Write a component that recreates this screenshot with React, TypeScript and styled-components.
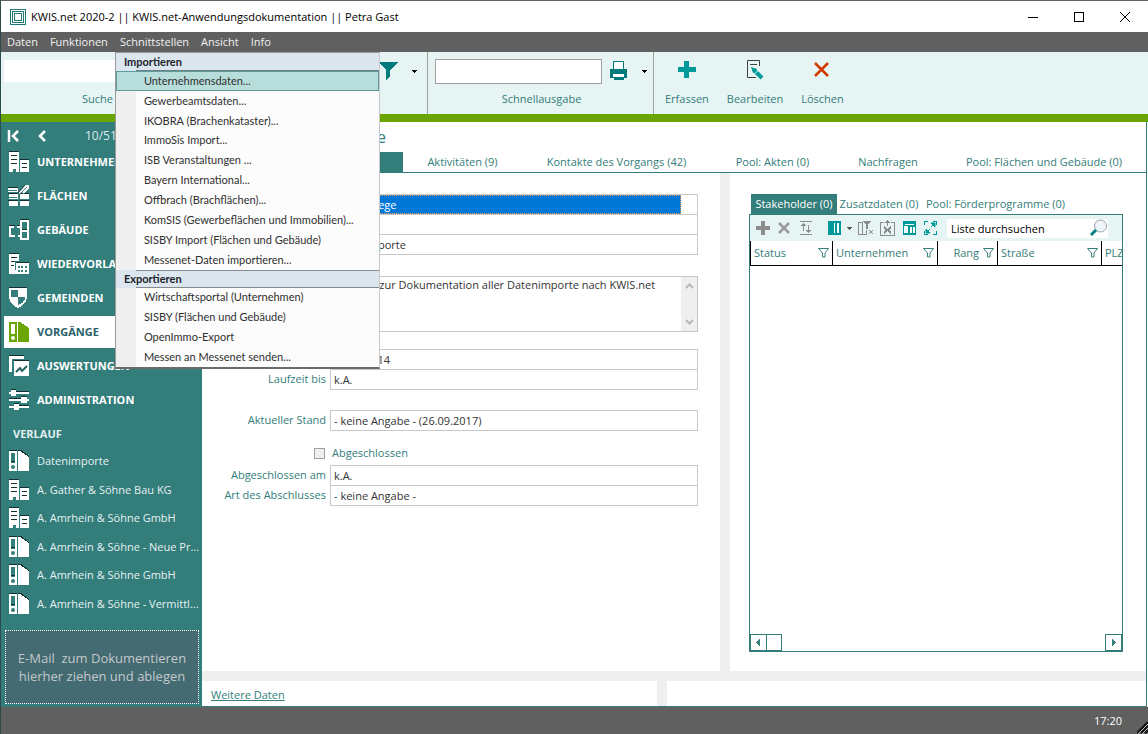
import React from "react";
import styled, { createGlobalStyle, css } from "styled-components";

const teal = "#337d7b";
const accent = "#009999";
const grey = "#606060";
const line = "#c8c8c8";
const pale = "#e6f5f4";

const GlobalStyle = createGlobalStyle`
  *, *::before, *::after { box-sizing: border-box; }
  body { margin: 0; background: ${grey}; }
  body, button, input, textarea, table {
    font-family: "Open Sans", "Noto Sans", sans-serif;
    font-size: 11px;
    line-height: 16px;
  }
  button { border: 0; padding: 0; background: none; color: inherit; }
  svg { display: block; flex: none; }
`;

/* ---------- window frame ---------- */

const Window = styled.div`
  display: flex;
  flex-direction: column;
  min-height: 100vh;
  border-top: 1px solid ${grey};
  border-left: 1px solid #2b4a4c;
  background: #fff;
`;

const TitleBar = styled.header`
  display: flex;
  align-items: center;
  height: 31px;
  padding-left: 9px;
  gap: 5px;
  background: #fff;
`;

const WindowTitle = styled.h1`
  flex: 1;
  margin: 0;
  font-size: 11px;
  font-weight: 400;
  color: #000;
  white-space: nowrap;
`;

const WindowButtons = styled.div`
  display: flex;
`;

const WindowButton = styled.button`
  display: flex;
  align-items: center;
  justify-content: center;
  width: 46px;
  height: 28px;
`;

const MenuBar = styled.nav`
  display: flex;
  align-items: center;
  gap: 12px;
  height: 20px;
  padding-left: 6px;
  background: ${grey};
  color: #f0f0f0;
`;

const MenuAnchor = styled.div`
  position: relative;
  display: flex;
`;

const MenuButton = styled.button`
  height: 20px;
`;

const Popup = styled.div`
  position: absolute;
  z-index: 5;
  top: 20px;
  left: -5px;
  display: flex;
  flex-direction: column;
  width: 265px;
  height: 317px;
  border: 1px solid #9a9a9a;
  border-right-color: #c8c8c8;
  border-bottom: 2px solid #6b6b6b;
  background: linear-gradient(to right, #efefef 20px, #fcfcfc 20px);
  color: #303030;
`;

const PopupHeading = styled.div`
  flex: 1;
  display: flex;
  align-items: center;
  padding-left: 8px;
  font-family: Lato, "Open Sans", sans-serif;
  font-weight: 700;
  color: #1c222c;
  background:
    linear-gradient(#85898f, #85898f) 20px 100% / 100% 1px no-repeat,
    linear-gradient(#85898f, #85898f) 20px 0 / 100% 1px no-repeat,
    #dce6ee;
  &:first-child {
    background: linear-gradient(#6f7f85, #6f7f85) 20px 100% / 100% 1px no-repeat, #dce6ee;
  }
`;

const PopupItem = styled.button<{ $active?: boolean }>`
  flex: 1;
  display: flex;
  align-items: center;
  padding-left: 27px;
  border: 1px solid transparent;
  font-family: Lato, "Open Sans", sans-serif;
  text-align: left;
  white-space: nowrap;
  ${(p) => p.$active && css`
    background: #b8dedb;
    border-color: #5d9c98;
  `}
`;

/* ---------- ribbon ---------- */

const Ribbon = styled.div`
  display: flex;
  height: 70px;
  padding-left: 3px;
  border-bottom: 8px solid #6ba500;
  background: ${pale};
  color: ${teal};
`;

const RibbonGroup = styled.div<{ $width: number }>`
  display: flex;
  flex-direction: column;
  align-items: center;
  gap: 8px;
  width: ${(p) => p.$width}px;
  padding-top: 7px;
  border-right: 1px solid #a0a0a0;
`;

const RibbonRow = styled.div<{ $end?: number }>`
  display: flex;
  align-items: center;
  align-self: stretch;
  height: 24px;
  padding-right: ${(p) => p.$end ?? 0}px;
`;

const RibbonLabel = styled.span`
  padding-left: 2px;
`;

const SearchLabel = styled.label`
  align-self: flex-start;
  padding-left: 78px;
`;

const RibbonSearch = styled.input`
  flex: 1;
  height: 22px;
  border: 0;
  background: #fff;
`;

const QuickOutput = styled.input`
  width: 167px;
  height: 25px;
  margin: 0 8px 0 7px;
  border: 1px solid #a0a0a0;
  background: #fff;
`;

const RibbonActions = styled.div`
  display: flex;
  gap: 18px;
  padding: 5px 0 0 11px;
`;

const RibbonAction = styled.button`
  display: flex;
  flex-direction: column;
  align-items: center;
  gap: 9px;
`;

const DropArrow = styled.button`
  display: flex;
  align-items: center;
  margin-left: 14px;
`;

/* ---------- body ---------- */

const Body = styled.div`
  flex: 1;
  display: flex;
`;

const Sidebar = styled.aside`
  display: flex;
  flex-direction: column;
  width: 201px;
  padding: 0 3px 3px 3px;
  background: ${teal};
  color: #fff;
`;

const Pager = styled.div`
  display: flex;
  align-items: center;
  gap: 16px;
  height: 24px;
  padding: 4px 0 0 3px;
  font-size: 12px;
`;

const PagerCount = styled.span`
  margin-left: 20px;
  color: #dcecec;
`;

const NavList = styled.nav`
  display: flex;
  flex-direction: column;
  gap: 2px;
`;

const NavItem = styled.a<{ $active?: boolean }>`
  display: flex;
  align-items: center;
  gap: 8px;
  height: 32px;
  padding-left: 4px;
  font-weight: 700;
  color: ${(p) => (p.$active ? "#28606a" : "#fff")};
  background: ${(p) => (p.$active ? "#fff" : "transparent")};
  text-decoration: none;
`;

const HistoryTitle = styled.h2`
  margin: 10px 0 5px 9px;
  font-size: 11px;
  line-height: 16px;
  font-weight: 700;
  color: #e4f0f0;
`;

const HistoryList = styled.div`
  flex: 1;
  display: flex;
  flex-direction: column;
`;

const HistoryItem = styled.a`
  flex: 1;
  display: flex;
  align-items: center;
  gap: 8px;
  padding-left: 4px;
  color: #e6f2f2;
  text-decoration: none;
  white-space: nowrap;
`;

const DropZone = styled.div`
  display: flex;
  align-items: center;
  justify-content: center;
  height: 74px;
  margin: 12px 0 0 1px;
  border: 1px dotted #fff;
  background: #446a72;
  color: #c3c9ca;
  font-size: 13px;
  line-height: 18px;
  text-align: center;
  white-space: pre;
`;

const Main = styled.main`
  flex: 1;
  display: flex;
  flex-direction: column;
  min-width: 0;
  border-right: 1px solid ${teal};
  border-bottom: 1px solid ${teal};
  margin-right: 1px;
`;

const RecordTitle = styled.h2`
  width: 184px;
  margin: 0;
  height: 30px;
  padding-top: 4px;
  font-size: 16px;
  line-height: 22px;
  font-weight: 400;
  text-align: right;
  color: ${teal};
`;

const Tabs = styled.div`
  display: flex;
  height: 21px;
  border-bottom: 1px solid ${teal};
  color: ${teal};
`;

const Tab = styled.button<{ $width: number; $active?: boolean }>`
  width: ${(p) => p.$width}px;
  height: 20px;
  white-space: nowrap;
  ${(p) => p.$active && css`
    background: ${teal};
    color: #fff;
  `}
`;

const Panes = styled.div`
  flex: 1;
  display: flex;
  gap: 10px;
  background: #efefef;
`;

const Pane = styled.section<{ $width?: number }>`
  ${(p) => (p.$width ? css`width: ${p.$width}px;` : css`flex: 1; min-width: 0;`)}
  background: #fff;
`;

const FormPane = styled(Pane)`
  padding: 21px 22px 0 0;
`;

const ListPane = styled(Pane)`
  display: flex;
  flex-direction: column;
  padding: 21px 23px 19px 19px;
`;

const Footer = styled.div`
  display: flex;
  gap: 10px;
  height: 35px;
  padding-top: 10px;
  background: #efefef;
`;

const MoreLink = styled.a`
  display: inline-block;
  margin: 6px 0 0 9px;
  color: ${teal};
`;

/* ---------- form ---------- */

const FieldGroup = styled.div<{ $gap?: number }>`
  display: flex;
  flex-direction: column;
  margin-bottom: ${(p) => p.$gap ?? 20}px;
`;

const FieldRow = styled.div`
  display: flex;
  & + & { margin-top: -1px; }
`;

const FieldLabel = styled.label`
  width: 128px;
  padding: 2px 4px 0 0;
  text-align: right;
  white-space: nowrap;
  color: ${teal};
`;

const fieldBox = css`
  flex: 1;
  min-width: 0;
  border: 1px solid ${line};
  background: #fff;
`;

const FieldInput = styled.input`
  ${fieldBox}
  height: 21px;
  padding: 0 3px;
  color: #333;
`;

const Selected = styled.div`
  ${fieldBox}
  height: 21px;
  padding-right: 16px;
`;

const SelectedInput = styled.input`
  display: block;
  width: 100%;
  height: 19px;
  padding: 0 2px;
  border: 1px dotted #e8a05a;
  background: #0078d7;
  color: #fff;
`;

const NoteBox = styled.div`
  ${fieldBox}
  display: flex;
  height: 56px;
`;

const Note = styled.textarea`
  flex: 1;
  border: 0;
  padding: 0 3px;
  resize: none;
  overflow: hidden;
  color: #333;
`;

const NoteScroll = styled.div`
  display: flex;
  flex-direction: column;
  justify-content: space-between;
  align-items: center;
  width: 16px;
  padding: 6px 0 5px;
  background: #efefef;
`;

const CheckRow = styled.div`
  display: flex;
  align-items: center;
  gap: 7px;
  height: 16px;
  margin: 14px 0 4px 112px;
  color: ${teal};
`;

const CheckBox = styled.input`
  appearance: none;
  width: 11px;
  height: 11px;
  margin: 0;
  border: 1px solid #a0a0a0;
  background: #efefef;
`;

/* ---------- list ---------- */

const ListTabs = styled.div`
  display: flex;
  height: 20px;
  padding-left: 2px;
  color: ${teal};
`;

const ListBox = styled.div`
  flex: 1;
  display: flex;
  flex-direction: column;
  border: 1px solid ${teal};
  overflow: hidden;
`;

const ListTools = styled.div`
  display: flex;
  align-items: center;
  height: 26px;
  padding-left: 6px;
  gap: 6px;
  background: ${pale};
`;

const ToolButton = styled.button`
  display: flex;
`;

const ListSearch = styled.label`
  display: flex;
  align-items: center;
  width: 161px;
  height: 19px;
  margin-left: 3px;
  background: #fff;
`;

const ListSearchInput = styled.input`
  flex: 1;
  min-width: 0;
  height: 19px;
  padding: 0 4px;
  border: 0;
  background: transparent;
  &::placeholder { color: #000; opacity: 1; }
`;

const Grid = styled.table`
  width: 100%;
  table-layout: fixed;
  border-collapse: collapse;
  color: ${teal};
`;

const HeadCell = styled.th<{ $width?: number }>`
  width: ${(p) => (p.$width ? p.$width + "px" : "auto")};
  height: 24px;
  padding: 0;
  border-left: 1px solid #000;
  border-bottom: 1px solid #000;
  font-weight: 400;
  text-align: left;
  overflow: hidden;
`;

const HeadInner = styled.div<{ $right?: boolean }>`
  display: flex;
  align-items: center;
  justify-content: ${(p) => (p.$right ? "flex-end" : "space-between")};
  gap: 4px;
  padding: 0 3px;
`;

const ScrollRow = styled.div`
  display: flex;
  height: 17px;
  margin-top: auto;
`;

const ScrollButton = styled.button<{ $end?: boolean }>`
  display: flex;
  align-items: center;
  justify-content: center;
  width: 17px;
  border: 1px solid ${teal};
  margin-left: ${(p) => (p.$end ? "auto" : "0")};
`;

const ScrollThumb = styled.div`
  width: 15px;
  border: 1px solid ${teal};
  border-left: 0;
`;

const StatusBar = styled.footer`
  display: flex;
  align-items: center;
  justify-content: flex-end;
  gap: 15px;
  height: 27px;
  background: ${grey};
  color: #fff;
`;

/* ---------- icons ---------- */

type IconProps = { w?: number; h?: number; children: React.ReactNode };
const Icon = ({ w = 21, h = 22, children }: IconProps) => (
  <svg width={w} height={h} viewBox={`0 0 ${w} ${h}`} fill="none" shapeRendering="crispEdges" aria-hidden="true">
    {children}
  </svg>
);

const BuildingIcon = () => (
  <Icon>
    <path d="M1 1h10v20H8v-3H5v3H1zM12 9h9v12h-9z" fill="#fff" />
    <path d="M1 0h10v1H1zM12 8h9v1h-9zM3 4h6v1H3zM3 8h6v1H3zM3 12h6v1H3zM14 12h5v1h-5zM14 16h5v1h-5z" fill="#12302f" />
  </Icon>
);
const AreaIcon = () => (
  <Icon>
    <path d="M0 3h10v4H0zM1 9h9v5H1zM1 16h9v5H1zM12 9h9v5h-9zM12 16h9v5h-9z" fill="#fff" />
    <path d="M0 2h10v1H0zM0 8h10v1H0zM0 15h10v1H0zM12 8h9v1h-9zM12 15h9v1h-9z" fill="#12302f" />
    <path d="M0 5h9M1 12h8" stroke={teal} />
    <path d="M11 8 18 1h3M15 8l6-6" stroke="#fff" strokeWidth="2" shapeRendering="auto" />
    <path d="M10 8 17 0" stroke="#12302f" shapeRendering="auto" />
  </Icon>
);
const PlanIcon = () => (
  <Icon>
    <path d="M6 8H2v9h5M9 8h4M10 17h3M13 12V2h7v18h-7v-8h7" stroke="#fff" strokeWidth="2" />
    <path d="M12 0h9v1h-9zM1 6h6v1H1zM9 6h3v1H9zM14 10h5v1h-5z" fill="#12302f" />
  </Icon>
);
const CalendarIcon = () => (
  <Icon>
    <path d="M1 1h10v7H7v9h1v4H1zM8 10h13v11H8z" fill="#fff" />
    <path d="M1 0h10v1H1zM8 9h13v1H8zM3 4h6v1H3zM3 8h4v1H3zM3 12h3v1H3z" fill="#12302f" />
    <path d="M10 13h2v2h-2zM13 13h2v2h-2zM17 13h2v2h-2zM10 17h2v2h-2zM13 17h2v2h-2zM17 17h2v2h-2z" fill={teal} />
  </Icon>
);
const ShieldIcon = () => (
  <Icon>
    <path d="M1 1h18v9c0 6-5 9-9 11-4-2-9-5-9-11z" fill="#fff" />
    <path d="M3 3h7v7H3zM10 10h7c0 4-3 7-7 8z" fill={teal} />
    <path d="M1 0h18v1H1z" fill="#12302f" />
  </Icon>
);
const BinderIcon = ({ color = "#fff", hole = teal, edge = true }) => (
  <Icon>
    <path d="M1 1h8v20H1zM10 1h2l9 6v14H10z" fill={color} />
    <path d="M3 3h4v10H3z" fill={hole} />
    <circle cx="5" cy="17" r="2" fill={hole} shapeRendering="auto" />
    {edge && <path d="M1 0h8v1H1zM10 0h3l8 6v1L12 1h-2zM3 11h4v1H3z" fill="#12302f" />}
  </Icon>
);
const ReportIcon = () => (
  <Icon>
    <path d="M1 1h15v3H4v13H1zM6 6h15v15H6z" fill="#fff" />
    <path d="M1 0h15v1H1zM6 5h15v1H6z" fill="#12302f" />
    <path d="m8 17 4-4 2 3 5-5" stroke="#24605f" strokeWidth="2" shapeRendering="auto" />
  </Icon>
);
const SlidersIcon = () => (
  <Icon>
    <path d="M1 3h20v2H1zM1 10h20v2H1zM1 17h20v2H1zM3 1h5v6H3zM13 8h6v6h-6zM6 15h5v6H6z" fill="#fff" />
    <path d="M3 0h5v1H3zM13 7h6v1h-6zM6 14h5v1H6zM8 2h13v1H8zM1 9h12v1H1zM11 16h10v1H11z" fill="#12302f" />
  </Icon>
);
const FunnelSmall = () => (
  <svg width="11" height="10" viewBox="0 0 11 10" fill="none" aria-hidden="true">
    <path d="M.5.5h10L7 5v4H4.500V5z" stroke={teal} />
  </svg>
);
const Caret = ({ color = "#000" }) => (
  <Icon w={5} h={3}><path d="M0 0h5L3 3H2z" fill={color} /></Icon>
);

/* ---------- data ---------- */

const importItems = [
  "Unternehmensdaten...", "Gewerbeamtsdaten...", "IKOBRA (Brachenkataster)...", "ImmoSis Import...",
  "ISB Veranstaltungen ...", "Bayern International...", "Offbrach (Brachflächen)...",
  "KomSIS (Gewerbeflächen und Immobilien)...", "SISBY Import (Flächen und Gebäude)",
  "Messenet-Daten importieren...",
];
const exportItems = [
  "Wirtschaftsportal (Unternehmen)", "SISBY (Flächen und Gebäude)", "OpenImmo-Export", "Messen an Messenet senden...",
];
const navItems = [
  { text: "UNTERNEHMEN", icon: <BuildingIcon /> },
  { text: "FLÄCHEN", icon: <AreaIcon /> },
  { text: "GEBÄUDE", icon: <PlanIcon /> },
  { text: "WIEDERVORLAGE", icon: <CalendarIcon /> },
  { text: "GEMEINDEN", icon: <ShieldIcon /> },
  { text: "VORGÄNGE", icon: <BinderIcon color="#6ba500" hole="#fff" edge={false} />, active: true },
  { text: "AUSWERTUNGEN", icon: <ReportIcon /> },
  { text: "ADMINISTRATION", icon: <SlidersIcon /> },
];
const history = [
  { text: "Datenimporte", firm: false },
  { text: "A. Gather & Söhne Bau KG", firm: true },
  { text: "A. Amrhein & Söhne GmbH", firm: true },
  { text: "A. Amrhein & Söhne - Neue Pr...", firm: false },
  { text: "A. Amrhein & Söhne GmbH", firm: false },
  { text: "A. Amrhein & Söhne - Vermittl...", firm: false },
];
const tabs = [
  { text: "Aktivitäten (9)", width: 119 },
  { text: "Kontakte des Vorgangs (42)", width: 189 },
  { text: "Pool: Akten (0)", width: 123 },
  { text: "Nachfragen", width: 108 },
  { text: "Pool: Flächen und Gebäude (0)", width: 204 },
];

const Field = ({ id, label, value }: { id: string; label: string; value: string }) => (
  <FieldRow>
    <FieldLabel htmlFor={id}>{label}</FieldLabel>
    <FieldInput id={id} defaultValue={value} />
  </FieldRow>
);

const PlainField = ({ name, value }: { name: string; value: string }) => (
  <FieldRow>
    <FieldLabel as="span" />
    <FieldInput aria-label={name} defaultValue={value} />
  </FieldRow>
);

export default function App() {
  return (
    <Window>
      <GlobalStyle />
      <TitleBar>
        <Icon w={16} h={16}>
          <path d="M.5.5h15v15H.5zM2.500 2.500h11v11h-11zM4.500 4.500h7v7h-7z" stroke="#1f7673" />
        </Icon>
        <WindowTitle>KWIS.net 2020-2 || KWIS.net-Anwendungsdokumentation || Petra Gast</WindowTitle>
        <WindowButtons>
          <WindowButton aria-label="Minimieren"><Icon w={10} h={10}><path d="M0 5h10v1H0z" fill="#000" /></Icon></WindowButton>
          <WindowButton aria-label="Maximieren"><Icon w={10} h={10}><path d="M.5.5h9v9h-9z" stroke="#000" /></Icon></WindowButton>
          <WindowButton aria-label="Schließen">
            <svg width="12" height="12" viewBox="0 0 12 12"><path d="m1 1 10 10M11 1 1 11" stroke="#000" /></svg>
          </WindowButton>
        </WindowButtons>
      </TitleBar>

      <MenuBar>
        <MenuButton>Daten</MenuButton>
        <MenuButton>Funktionen</MenuButton>
        <MenuAnchor>
          <MenuButton>Schnittstellen</MenuButton>
          <Popup>
            <PopupHeading>Importieren</PopupHeading>
            {importItems.map((t, i) => <PopupItem key={t} $active={i === 0}>{t}</PopupItem>)}
            <PopupHeading>Exportieren</PopupHeading>
            {exportItems.map((t) => <PopupItem key={t}>{t}</PopupItem>)}
          </Popup>
        </MenuAnchor>
        <MenuButton>Ansicht</MenuButton>
        <MenuButton>Info</MenuButton>
      </MenuBar>

      <Ribbon>
        <RibbonGroup $width={424}>
          <RibbonRow $end={10}>
            <RibbonSearch id="search" />
            <DropArrow aria-label="Filter">
              <Icon w={20} h={20}><path d="M0 1h20l-8 8v7l-4 3V9z" fill="#007b7b" /></Icon>
            </DropArrow>
            <DropArrow aria-label="Filteroptionen"><Caret /></DropArrow>
          </RibbonRow>
          <SearchLabel htmlFor="search">Suche</SearchLabel>
        </RibbonGroup>
        <RibbonGroup $width={226}>
          <RibbonRow>
            <QuickOutput aria-label="Schnellausgabe" />
            <ToolButton aria-label="Drucken">
              <Icon w={18} h={20}>
                <path d="M0 8h17v9H0z" fill="#007b7b" />
                <path d="M3.500.5h10v8h-10z" fill="#fff" stroke="#007b7b" />
                <path d="M3.500 13.500h10v5h-10z" fill="#007b7b" />
                <path d="M3 13h11v3H3z" fill="#fff" />
              </Icon>
            </ToolButton>
            <DropArrow aria-label="Druckoptionen"><Caret /></DropArrow>
          </RibbonRow>
          <RibbonLabel>Schnellausgabe</RibbonLabel>
        </RibbonGroup>
        <RibbonActions>
          <RibbonAction>
            <Icon w={24} h={25}><path d="M9 4h5v6h7v5h-7v6H9v-6H3v-5h6z" fill={accent} /></Icon>
            Erfassen
          </RibbonAction>
          <RibbonAction>
            <svg width="24" height="25" viewBox="0 0 24 25" fill="none">
              <path d="M16.500 9V3.500h-12v17H13M7 7.500h7" stroke="#404040" />
              <path d="m11 13 8 8" stroke={accent} strokeWidth="4" />
              <path d="m8 10 6 2-4 4z" fill={accent} />
              <path d="m12 16.500 3.500-3.500" stroke="#fff" />
            </svg>
            Bearbeiten
          </RibbonAction>
          <RibbonAction>
            <svg width="24" height="25" viewBox="0 0 24 25"><path d="m4 6 13 13M17 6 4 19" stroke="#d03800" strokeWidth="2.500" /></svg>
            Löschen
          </RibbonAction>
        </RibbonActions>
      </Ribbon>

      <Body>
        <Sidebar>
          <Pager>
            <ToolButton aria-label="Erster Datensatz">
              <svg width="13" height="12" viewBox="0 0 13 12" fill="none"><path d="M2 0v12M11 1 6 6l5 5" stroke="#fff" strokeWidth="2.500" /></svg>
            </ToolButton>
            <ToolButton aria-label="Vorheriger Datensatz">
              <svg width="13" height="12" viewBox="0 0 13 12" fill="none"><path d="M9 1 4 6l5 5" stroke="#fff" strokeWidth="2.500" /></svg>
            </ToolButton>
            <PagerCount>10/51</PagerCount>
          </Pager>
          <NavList>
            {navItems.map((n) => <NavItem key={n.text} href="#" $active={n.active}>{n.icon}{n.text}</NavItem>)}
          </NavList>
          <HistoryTitle>VERLAUF</HistoryTitle>
          <HistoryList>
            {history.map((h, i) => (
              <HistoryItem key={i} href="#">{h.firm ? <BuildingIcon /> : <BinderIcon />}{h.text}</HistoryItem>
            ))}
          </HistoryList>
          <DropZone>{"E-Mail  zum Dokumentieren\nhierher ziehen und ablegen"}</DropZone>
        </Sidebar>

        <Main>
          <RecordTitle>Datenimporte</RecordTitle>
          <Tabs>
            <Tab $width={201} $active aria-label="Vorgang" />
            {tabs.map((t) => <Tab key={t.text} $width={t.width}>{t.text}</Tab>)}
          </Tabs>
          <Panes>
            <FormPane $width={518}>
              <FieldGroup $gap={21}>
                <FieldRow>
                  <FieldLabel as="span" />
                  <Selected><SelectedInput aria-label="Vorgangsart" defaultValue="Datenpflege" /></Selected>
                </FieldRow>
                <PlainField name="Nummer" value="" />
                <PlainField name="Bezeichnung" value="Datenimporte" />
              </FieldGroup>
              <FieldGroup $gap={17}>
                <FieldRow>
                  <FieldLabel as="span" />
                  <NoteBox>
                    <Note aria-label="Beschreibung" defaultValue="Vorgang zur Dokumentation aller Datenimporte nach KWIS.net" />
                    <NoteScroll>
                      <svg width="9" height="7" viewBox="0 0 9 7" fill="none"><path d="m1 5 3.500-3.500L8 5" stroke="#b8b8b8" strokeWidth="2" /></svg>
                      <svg width="9" height="7" viewBox="0 0 9 7" fill="none"><path d="m1 1 3.500 3.500L8 1" stroke="#b8b8b8" strokeWidth="2" /></svg>
                    </NoteScroll>
                  </NoteBox>
                </FieldRow>
              </FieldGroup>
              <FieldGroup>
                <PlainField name="Laufzeit von" value="01.01.2014" />
                <Field id="to" label="Laufzeit bis" value="k.A." />
              </FieldGroup>
              <FieldGroup $gap={0}>
                <Field id="state" label="Aktueller Stand" value="- keine Angabe - (26.09.2017)" />
              </FieldGroup>
              <CheckRow>
                <CheckBox type="checkbox" id="done" />
                <label htmlFor="done">Abgeschlossen</label>
              </CheckRow>
              <FieldGroup>
                <Field id="doneAt" label="Abgeschlossen am" value="k.A." />
                <Field id="doneKind" label="Art des Abschlusses" value="- keine Angabe -" />
              </FieldGroup>
            </FormPane>

            <ListPane>
              <ListTabs>
                <Tab $width={86} $active>Stakeholder (0)</Tab>
                <Tab $width={84}>Zusatzdaten (0)</Tab>
                <Tab $width={149}>Pool: Förderprogramme (0)</Tab>
              </ListTabs>
              <ListBox>
                <ListTools>
                  <ToolButton aria-label="Hinzufügen"><Icon w={14} h={14}><path d="M5 0h4v5h5v4H9v5H5V9H0V5h5z" fill="#8c8c8c" /></Icon></ToolButton>
                  <ToolButton aria-label="Entfernen">
                    <svg width="16" height="14" viewBox="0 0 16 14"><path d="m3 2 10 10M13 2 3 12" stroke="#999" strokeWidth="2.500" /></svg>
                  </ToolButton>
                  <ToolButton aria-label="Sortieren">
                    <Icon w={14} h={16}>
                      <path d="M2 1.500h12M2 14.500h12M5.500 4v7M10.500 5v7" stroke="#8c8c8c" />
                      <path d="M3 6h5L6 3H5zM8 10h5l-2 3h-1z" fill="#8c8c8c" />
                    </Icon>
                  </ToolButton>
                  <ToolButton aria-label="Spalten">
                    <Icon w={23} h={14}>
                      <path d="M10 0h13v14H10z" fill={accent} /><path d="M16 2h1v10h-1zM19 2h2v10h-2z" fill="#fff" />
                    </Icon>
                  </ToolButton>
                  <Caret color="#555" />
                  <ToolButton aria-label="Filter entfernen">
                    <Icon w={16} h={16}>
                      <path d="M.5 2.500h4v12h-4zM4.500 5.500v9h4v-5M11 10l4 4M15 10l-4 4" stroke="#8c8c8c" />
                      <path d="M4 1h9l-3 4v4H8V5z" fill="#8c8c8c" />
                    </Icon>
                  </ToolButton>
                  <ToolButton aria-label="Exportieren">
                    <Icon w={15} h={16}>
                      <path d="M4 2.500H.5v13h14v-13H11M7.500 1v5" stroke="#8c8c8c" />
                      <path d="M5 3h5L8 0H7z" fill="#8c8c8c" />
                      <path d="m4 7 7 6M11 7l-7 6" stroke="#8c8c8c" strokeWidth="2" />
                    </Icon>
                  </ToolButton>
                  <ToolButton aria-label="Ansicht">
                    <Icon w={16} h={14}>
                      <path d="M2 0h13v14H2z" fill={accent} /><path d="M4 3h9v1H4zM3 5h4v7H3zM9 6h2v6H9zM12 6h2v6h-2z" fill="#fff" />
                    </Icon>
                  </ToolButton>
                  <ToolButton aria-label="Vollbild">
                    <Icon w={15} h={14}>
                      <path d="M1.500 4V.5H5M10 .5h3.500V4M13.500 10v3.500H10M5 13.500H1.500V10" stroke={accent} />
                      <path d="M8 2h4v4zM3 8v4h4zM8 6l3-3M4 11l3-3" fill={accent} stroke={accent} shapeRendering="auto" />
                    </Icon>
                  </ToolButton>
                  <ListSearch>
                    <ListSearchInput placeholder="Liste durchsuchen" aria-label="Liste durchsuchen" />
                    <svg width="20" height="18" viewBox="0 0 20 18" fill="none">
                      <circle cx="12.500" cy="7" r="6" fill="#eef6fb" stroke="#98a4aa" />
                      <path d="m8 11-5 5" stroke="#00817f" strokeWidth="3" />
                    </svg>
                  </ListSearch>
                </ListTools>
                <Grid>
                  <thead>
                    <tr>
                      <HeadCell $width={82}><HeadInner>Status<FunnelSmall /></HeadInner></HeadCell>
                      <HeadCell $width={105}><HeadInner>Unternehmen<FunnelSmall /></HeadInner></HeadCell>
                      <HeadCell $width={60}><HeadInner $right>Rang<FunnelSmall /></HeadInner></HeadCell>
                      <HeadCell $width={104}><HeadInner>Straße<FunnelSmall /></HeadInner></HeadCell>
                      <HeadCell><HeadInner>PLZ</HeadInner></HeadCell>
                    </tr>
                  </thead>
                </Grid>
                <ScrollRow>
                  <ScrollButton aria-label="Nach links"><Icon w={5} h={7}><path d="M4 0v7L0 4V3z" fill={teal} /></Icon></ScrollButton>
                  <ScrollThumb />
                  <ScrollButton $end aria-label="Nach rechts"><Icon w={5} h={7}><path d="M1 0v7l4-3V3z" fill={teal} /></Icon></ScrollButton>
                </ScrollRow>
              </ListBox>
            </ListPane>
          </Panes>
          <Footer>
            <Pane $width={455}><MoreLink href="#">Weitere Daten</MoreLink></Pane>
            <Pane />
          </Footer>
        </Main>
      </Body>

      <StatusBar>
        <span>17:20</span>
        <svg width="11" height="27" viewBox="0 0 11 27" fill="none">
          <path d="m0 26 11-11M4 26l7-7M8 26l3-3" stroke="#111" strokeWidth="2" />
          <path d="m1 27 11-11M5 27l7-7" stroke="#bbb" strokeWidth="1" />
        </svg>
      </StatusBar>
    </Window>
  );
}
